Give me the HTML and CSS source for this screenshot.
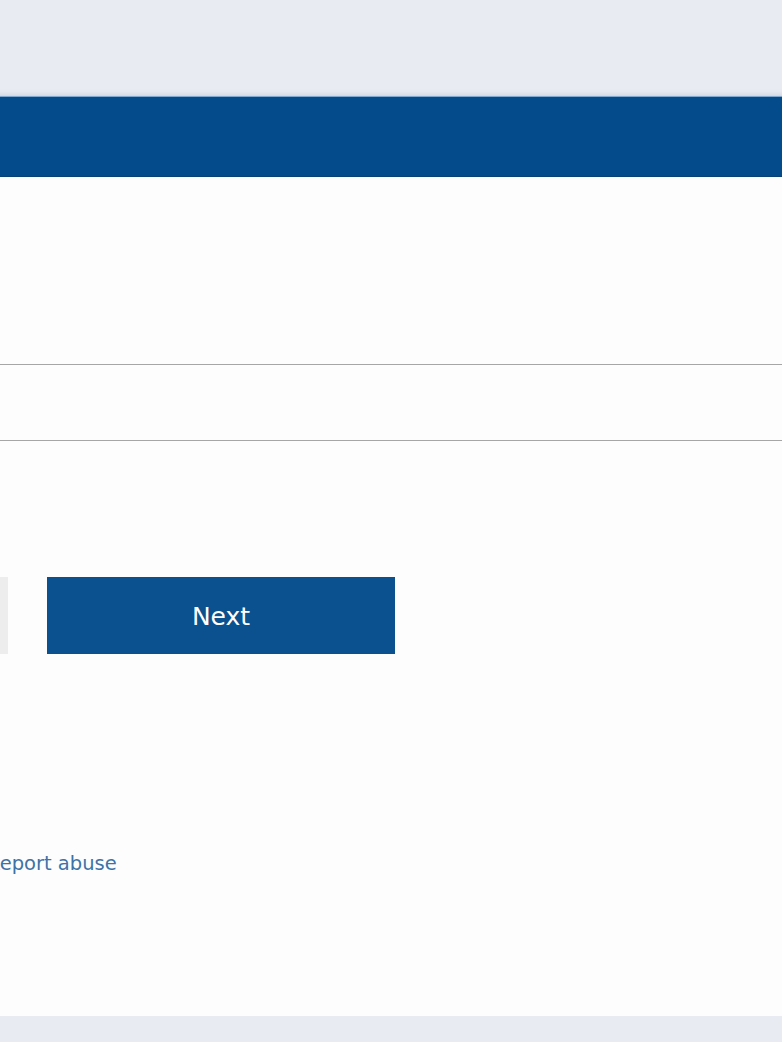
FILE: index.html
```html
<!DOCTYPE html>
<html>
<head>
    <title>Sign in</title>
    <link rel="stylesheet" href="styles.css">
</head>
<body>
    <div class="page">
        <div class="card">
            <div class="card-header"></div>
            <div class="card-body">
                <div class="input-row">
                    <input type="text" class="input-field" autocomplete="off">
                </div>
                <div class="button-row">
                    <button class="back-btn"></button>
                    <button class="next-btn">Next</button>
                </div>
                <div class="footer-links">
                    <a href="#" class="abuse-link">Report abuse</a>
                </div>
            </div>
        </div>
    </div>
</body>
</html>
```

FILE: styles.css
```css
html, body {
    margin: 0;
    padding: 0;
}

body {
    background-color: #e9ebf3;
    font-family: "DejaVu Sans", Verdana, sans-serif;
    overflow: hidden;
    height: 1042px;
}

.page {
    padding-top: 96px;
    overflow: hidden;
}

.card {
    margin-left: -380px;
    width: 1300px;
    height: 920px;
    background-color: #fdfdfd;
    box-shadow: 0 0 6px rgba(120, 130, 150, 0.35);
}

.card-header {
    height: 79px;
    background-color: #034b8a;
    border-top: 1px solid #7fa8d2;
    border-bottom: 1px solid #0a4277;
}

.card-body {
    padding: 187px 0 0 40px;
}

.input-row {
    margin-right: -40px;
}

.input-field {
    display: block;
    box-sizing: border-box;
    width: 100%;
    height: 77px;
    border: none;
    border-top: 1px solid #a6a6a6;
    border-bottom: 1px solid #a6a6a6;
    background-color: #fdfdfd;
    outline: none;
}

.button-row {
    display: flex;
    gap: 39px;
    margin-top: 136px;
}

.back-btn,
.next-btn {
    width: 348px;
    height: 77px;
    border: none;
    font-family: "DejaVu Sans", Verdana, sans-serif;
    font-size: 25px;
    cursor: pointer;
}

.back-btn {
    background-color: #ededed;
}

.next-btn {
    background-color: #0b5190;
    color: #fff;
    padding-top: 2px;
}

.footer-links {
    margin-top: 198px;
    padding-left: 327px;
}

.abuse-link {
    color: #3d73a8;
    font-size: 19.5px;
    text-decoration: none;
}
```
